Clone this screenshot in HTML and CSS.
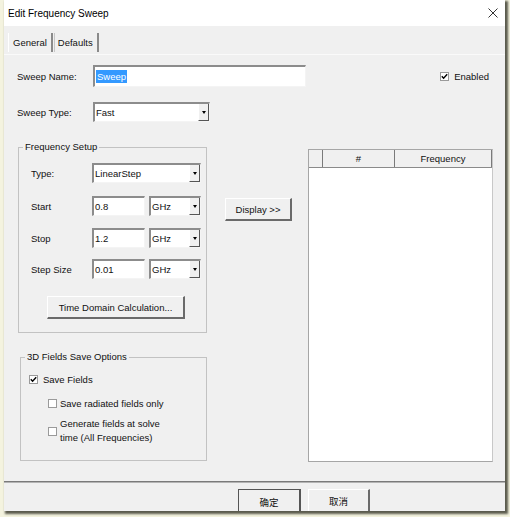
FILE: index.html
```html
<!DOCTYPE html>
<html>
<head>
<meta charset="utf-8">
<link rel="stylesheet" href="styles.css">
</head>
<body>
<div class="screen">
  <div class="window">
    <div class="titlebar">
      <span class="title">Edit Frequency Sweep</span>
      <svg class="close" width="10" height="10" viewBox="0 0 10 10"><path d="M0.5 0.5 L9.5 9.5 M9.5 0.5 L0.5 9.5" stroke="#333" stroke-width="1" fill="none"/></svg>
    </div>
    <div class="tabs">
      <div class="tab active">General</div>
      <div class="tab">Defaults</div>
    </div>
    <div class="panel">
      <div class="row row-name">
        <span class="lbl">Sweep Name:</span>
        <div class="input name-input"><span class="hl">Sweep</span></div>
        <div class="check enabled">
          <svg class="cb" width="9" height="9" viewBox="0 0 9 9"><rect x="0.5" y="0.5" width="8" height="8" fill="#fff" stroke="#9a9a9a"/><path d="M1.8 4.2 L3.6 6.2 L7.2 2.2" stroke="#000" stroke-width="1.4" fill="none"/></svg>
          <span>Enabled</span>
        </div>
      </div>
      <div class="row row-type">
        <span class="lbl">Sweep Type:</span>
        <div class="select type-select"><span class="val">Fast</span><span class="arrow"><i></i></span></div>
      </div>
      <div class="main">
        <div class="left">
          <fieldset class="group freq">
            <legend>Frequency Setup</legend>
            <div class="frow first">
              <span class="flbl">Type:</span>
              <div class="select long"><span class="val">LinearStep</span><span class="arrow"><i></i></span></div>
            </div>
            <div class="frow">
              <span class="flbl">Start</span>
              <div class="input num">0.8</div>
              <div class="select unit"><span class="val">GHz</span><span class="arrow"><i></i></span></div>
            </div>
            <div class="frow">
              <span class="flbl">Stop</span>
              <div class="input num">1.2</div>
              <div class="select unit"><span class="val">GHz</span><span class="arrow"><i></i></span></div>
            </div>
            <div class="frow last">
              <span class="flbl">Step Size</span>
              <div class="input num">0.01</div>
              <div class="select unit"><span class="val">GHz</span><span class="arrow"><i></i></span></div>
            </div>
            <button class="btn tdc">Time Domain Calculation...</button>
          </fieldset>
          <fieldset class="group fields">
            <legend>3D Fields Save Options</legend>
            <div class="check save">
              <svg class="cb" width="9" height="9" viewBox="0 0 9 9"><rect x="0.5" y="0.5" width="8" height="8" fill="#fff" stroke="#9a9a9a"/><path d="M1.8 4.2 L3.6 6.2 L7.2 2.2" stroke="#000" stroke-width="1.4" fill="none"/></svg>
              <span>Save Fields</span>
            </div>
            <div class="check sub">
              <svg class="cb" width="9" height="9" viewBox="0 0 9 9"><rect x="0.5" y="0.5" width="8" height="8" fill="#fff" stroke="#9a9a9a"/></svg>
              <span>Save radiated fields only</span>
            </div>
            <div class="check sub two">
              <svg class="cb" width="9" height="9" viewBox="0 0 9 9"><rect x="0.5" y="0.5" width="8" height="8" fill="#fff" stroke="#9a9a9a"/></svg>
              <span>Generate fields at solve<br>time (All Frequencies)</span>
            </div>
          </fieldset>
        </div>
        <div class="mid">
          <button class="btn display">Display &gt;&gt;</button>
        </div>
        <div class="table">
          <div class="thead">
            <div class="th c1"></div>
            <div class="th c2">#</div>
            <div class="th c3">Frequency</div>
          </div>
        </div>
      </div>
    </div>
    <div class="separator"></div>
    <div class="footer">
      <button class="btn ok">确定</button>
      <button class="btn cancel">取消</button>
    </div>
  </div>
</div>
</body>
</html>
```
FILE: styles.css
```css
html, body {
  margin: 0;
  padding: 0;
}
body {
  background: #f4f3df;
  font-family: "Liberation Sans", "Noto Sans CJK SC", sans-serif;
  font-size: 9.5px;
  color: #111;
}
.screen {
  width: 510px;
  height: 517px;
  overflow: hidden;
  background: #f4f3df;
}
.window {
  margin-left: 4px;
  width: 501px;
  height: 511px;
  background: #f0f0f0;
  box-shadow: 2px 2px 2px 1px rgba(40, 40, 30, 0.75);
  overflow: hidden;
  display: flex;
  flex-direction: column;
}
.titlebar {
  height: 26px;
  flex: none;
  background: #fff;
  display: flex;
  align-items: center;
  padding-left: 4px;
  padding-right: 7px;
}
.title {
  font-size: 10px;
  color: #000;
}
.close {
  margin-left: auto;
}
.tabs {
  flex: none;
  display: flex;
  padding: 7px 0 0 4px;
  height: 21px;
  border-bottom: 1px solid #fafafa;
}
.tab {
  height: 19px;
  line-height: 19px;
  padding: 0 4px;
  border-right: 2px solid #8a8a8a;
}
.tab.active {
  border-left: 1px solid #ffffff;
}
.tab + .tab {
  margin-left: 1px;
  border-left: 1px solid #c6c6c6;
  padding-left: 3px;
}
.panel {
  padding: 10px 12px 0 13px;
  flex: none;
}
.row {
  display: flex;
  align-items: center;
}
.lbl {
  width: 76px;
  flex: none;
}
.input {
  box-sizing: border-box;
  background: #fff;
  border-top: 2px solid #8c8c8c;
  border-left: 2px solid #8c8c8c;
  border-right: 1px solid #f4f4f4;
  border-bottom: 1px solid #f4f4f4;
  padding-left: 1px;
  display: flex;
  align-items: center;
}
.name-input {
  width: 213px;
  height: 22px;
}
.hl {
  background: #3399ff;
  color: #fff;
  padding: 0 1px;
  line-height: 13px;
}
.enabled {
  margin-left: auto;
  margin-right: 4px;
}
.check {
  display: flex;
  align-items: center;
  gap: 5px;
}
.cb {
  flex: none;
  display: block;
}
.row-type {
  margin-top: 15px;
}
.select {
  box-sizing: border-box;
  background: #fff;
  border-top: 2px solid #8c8c8c;
  border-left: 2px solid #8c8c8c;
  border-right: 1px solid #f4f4f4;
  border-bottom: 1px solid #f4f4f4;
  display: flex;
  align-items: stretch;
}
.select .val {
  flex: 1;
  padding-left: 1px;
  display: flex;
  align-items: center;
}
.select .arrow {
  width: 11px;
  flex: none;
  background: #f0f0f0;
  box-sizing: border-box;
  border-right: 1px solid #555;
  border-bottom: 1px solid #555;
  border-left: 1px solid #fff;
  display: flex;
  align-items: center;
  justify-content: center;
}
.select .arrow i {
  width: 0;
  height: 0;
  border-left: 2.5px solid transparent;
  border-right: 2.5px solid transparent;
  border-top: 3px solid #000;
}
.type-select {
  width: 117px;
  height: 20px;
}
.main {
  margin-top: 19px;
  display: grid;
  grid-template-columns: 190px 101px 185px;
  align-items: start;
}
.left {
  display: flex;
  flex-direction: column;
}
.group {
  margin: 0;
  min-width: 0;
  box-sizing: border-box;
  border: 1px solid #c2c2c2;
}
.group legend {
  padding: 0 2px;
  line-height: 12px;
}
.freq legend {
  margin-left: -8px;
}
.fields legend {
  margin-left: -4px;
}
.freq {
  margin-left: 1px;
  width: 189px;
  height: 192px;
  padding: 10px 0 0 12px;
}
.frow {
  display: flex;
  align-items: center;
  margin-top: 12px;
}
.frow.first {
  margin-top: 0;
}
.frow.first + .frow {
  margin-top: 13px;
}
.frow.last {
  margin-top: 11px;
}
.flbl {
  width: 61px;
  flex: none;
}
.long {
  width: 109px;
  height: 20px;
}
.num {
  width: 53px;
  height: 20px;
  margin-right: 4px;
}
.unit {
  width: 52px;
  height: 20px;
}
.btn {
  font-family: "Liberation Sans", "Noto Sans CJK SC", sans-serif;
  font-size: 9.5px;
  color: #111;
  background: #f0f0f0;
  box-sizing: border-box;
  border-top: 1px solid #fff;
  border-left: 1px solid #fff;
  border-right: 2px solid #6a6a6a;
  border-bottom: 2px solid #6a6a6a;
  padding: 0;
  margin: 0;
}
.tdc {
  display: block;
  margin: 17px 0 0 16px;
  width: 138px;
  height: 23px;
}
.fields {
  margin-left: 3px;
  margin-top: 18px;
  width: 187px;
  height: 110px;
  padding: 9px 0 0 8px;
}
.save {
  height: 14px;
}
.sub {
  margin-left: 19px;
  gap: 3px;
}
.check.sub {
  margin-top: 12px;
}
.check.sub.two {
  margin-top: 8px;
  line-height: 14px;
}
.mid {
  padding-top: 57px;
}
.display {
  margin-left: 18px;
  width: 67px;
  height: 23px;
}
.table {
  margin-top: 8px;
  height: 313px;
  box-sizing: border-box;
  background: #fff;
  border: 1px solid #a6a6a6;
  border-right-color: #c8c8c8;
}
.thead {
  display: flex;
  height: 17px;
  background: #f0f0f0;
  border-bottom: 1px solid #8a8a8a;
}
.th {
  box-sizing: border-box;
  border-right: 1px solid #7a7a7a;
  text-align: center;
  line-height: 17px;
}
.c1 { width: 14px; }
.c2 { width: 72px; }
.c3 { width: 97px; }
.separator {
  flex: none;
  margin-top: 19px;
  height: 1px;
  background: #7a7a7a;
  border-bottom: 1px solid #b4b4b4;
}
.footer {
  flex: none;
  display: flex;
  gap: 7px;
  padding: 6px 0 0 234px;
}
.ok {
  width: 63px;
  height: 25px;
  border: 1px solid #555;
  border-right-width: 2px;
}
.cancel {
  width: 62px;
  height: 25px;
  border-right: 2px solid #6a6a6a;
  border-left: 1px solid #fff;
}
```
